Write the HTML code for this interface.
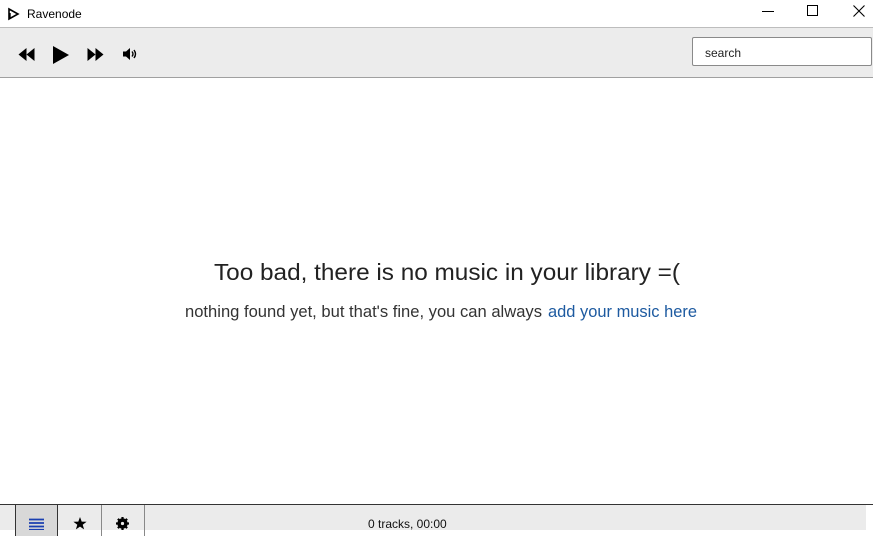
<!DOCTYPE html>
<html><head><meta charset="utf-8"><style>
*{margin:0;padding:0;box-sizing:border-box}
body{width:881px;height:536px;background:#fff;position:relative;overflow:hidden;font-family:"Liberation Sans",sans-serif}
.abs{position:absolute}
</style></head><body>
<!-- title bar -->
<svg class="abs" style="left:7px;top:7px" width="14" height="14" viewBox="0 0 14 14"><path d="M2 2 L11 7 L2 12 Z" fill="none" stroke="#000" stroke-width="1.6"/><path d="M3 6 L3 11" stroke="#000" stroke-width="1.4"/></svg>
<div class="abs" style="left:27px;top:7px;font-size:12px;color:#000">Ravenode</div>
<div class="abs" style="left:762px;top:11px;width:12px;height:1px;background:#000"></div>
<div class="abs" style="left:807px;top:5px;width:11px;height:11px;border:1px solid #000"></div>
<svg class="abs" style="left:853px;top:5px" width="12" height="12"><path d="M0.5 0.5L11.5 11.5M11.5 0.5L0.5 11.5" stroke="#000" stroke-width="1.1"/></svg>
<!-- toolbar -->
<div class="abs" style="left:0;top:27px;width:873px;height:51px;background:#ececec;border-top:1px solid #bdbdbd;border-bottom:1px solid #a0a0a0"></div>
<svg class="abs" style="left:18px;top:47px" width="17" height="15" viewBox="0 0 17 15"><path d="M8.5 1L0.5 7.5L8.5 14Z M16.5 1L8.5 7.5L16.5 14Z" fill="#000"/></svg>
<svg class="abs" style="left:52px;top:45px" width="18" height="20" viewBox="0 0 18 20"><path d="M1 1L17 10L1 19Z" fill="#000"/></svg>
<svg class="abs" style="left:87px;top:47px" width="17" height="15" viewBox="0 0 17 15"><path d="M0.5 1L8.5 7.5L0.5 14Z M8.5 1L16.5 7.5L8.5 14Z" fill="#000"/></svg>
<svg class="abs" style="left:122px;top:47px" width="18" height="14" viewBox="0 0 18 14"><path d="M1 4.5H4L8 1V13L4 9.5H1Z" fill="#000"/><path d="M10 4.5Q12 7 10 9.5M12 3Q15 7 12 11" stroke="#000" stroke-width="1.4" fill="none"/></svg>
<div class="abs" style="left:692px;top:37px;width:180px;height:29px;background:#fff;border:1px solid #8a8a8a;border-radius:2px;font-size:12px;color:#222;padding:8px 0 0 12px">search</div>
<!-- center text -->
<svg class="abs" style="left:0;top:250px" width="881" height="80">
<text x="214" y="30" textLength="466" lengthAdjust="spacingAndGlyphs" font-family="Liberation Sans, sans-serif" font-size="23" fill="#222">Too bad, there is no music in your library =(</text>
<text x="185" y="67" textLength="357" lengthAdjust="spacingAndGlyphs" font-family="Liberation Sans, sans-serif" font-size="16.5" fill="#333">nothing found yet, but that's fine, you can always</text>
<text x="548" y="67" textLength="149" lengthAdjust="spacingAndGlyphs" font-family="Liberation Sans, sans-serif" font-size="16.5" fill="#1d5aa0">add your music here</text>
</svg>
<!-- bottom bar -->
<div class="abs" style="left:0;top:504px;width:873px;height:1px;background:#333"></div>
<div class="abs" style="left:0;top:505px;width:866px;height:25px;background:#ebebeb"></div>
<div class="abs" style="left:15px;top:505px;width:43px;height:31px;background:#d8d8d8;border-left:1px solid #333;border-right:1px solid #333"></div>
<div class="abs" style="left:101px;top:505px;width:1px;height:31px;background:#888"></div>
<div class="abs" style="left:144px;top:505px;width:1px;height:31px;background:#888"></div>
<svg class="abs" style="left:29px;top:518px" width="16" height="12"><path d="M0 1.5H15M0 5H15M0 8.5H15" stroke="#1a3fb0" stroke-width="1.8"/><path d="M0 11.5H15" stroke="#1a3fb0" stroke-width="1.2"/></svg>
<svg class="abs" style="left:73px;top:517px" width="14" height="13" viewBox="0 0 14 13"><path d="M7 0L8.7 4.6L13.6 4.7L9.7 7.7L11.1 12.4L7 9.6L2.9 12.4L4.3 7.7L0.4 4.7L5.3 4.6Z" fill="#000"/></svg>
<svg class="abs" style="left:116px;top:517px" width="13" height="13" viewBox="0 0 13 13"><circle cx="6.5" cy="6.5" r="4" fill="none" stroke="#000" stroke-width="2.4"/><path d="M6.5 0V13M0 6.5H13M1.9 1.9L11.1 11.1M11.1 1.9L1.9 11.1" stroke="#000" stroke-width="2.2"/><circle cx="6.5" cy="6.5" r="1.6" fill="#ebebeb"/></svg>
<div class="abs" style="left:368px;top:517px;font-size:12px;color:#111">0 tracks, 00:00</div>
</body></html>
